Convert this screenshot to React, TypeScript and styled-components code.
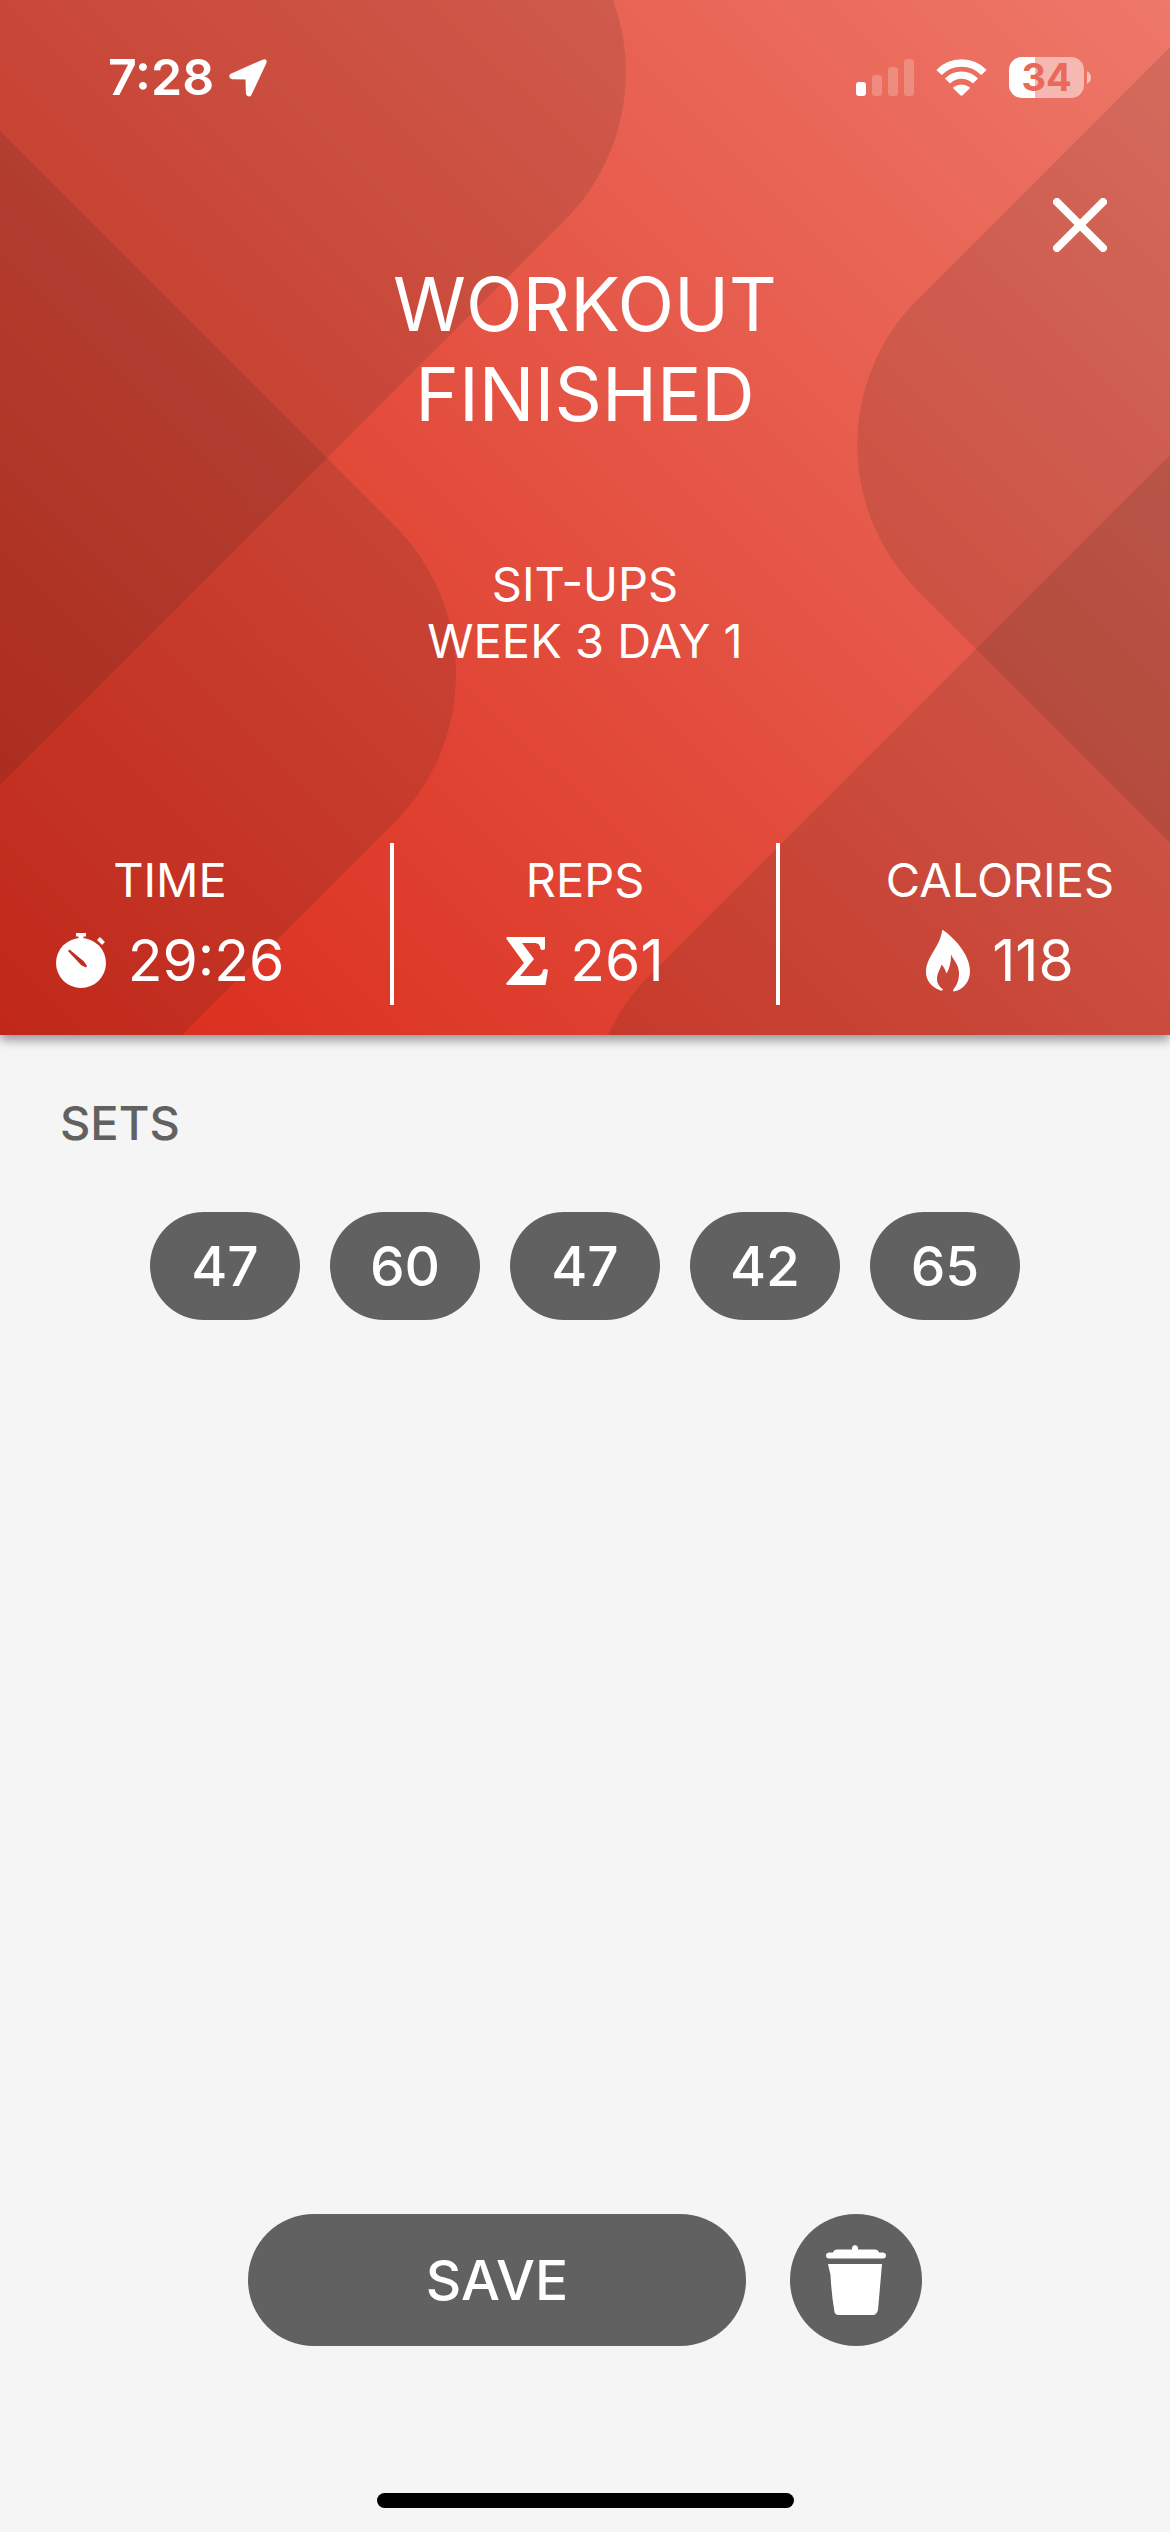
import React from "react";
import styled, { createGlobalStyle } from "styled-components";

const GlobalStyle = createGlobalStyle`
  * { box-sizing: border-box; }
  body {
    margin: 0;
    background: #f5f5f5;
    font-family: Inter, "Liberation Sans", sans-serif;
  }
  h1, h2, p, dl, dt, dd, ul { margin: 0; padding: 0; font-weight: inherit; }
  svg { display: block; }
`;

const Page = styled.div`
  min-height: 100vh;
  display: flex;
  flex-direction: column;
`;

const Header = styled.header`
  position: relative;
  isolation: isolate;
  display: flex;
  flex-direction: column;
  padding-bottom: 30px;
  color: #fff;
  background: #e14c3c;
  box-shadow: 0 5px 10px rgba(0, 0, 0, 0.4);
`;

const Backdrop = styled.svg`
  position: absolute;
  inset: 0;
  z-index: -1;
  width: 100%;
  height: 100%;
`;

const StatusBar = styled.div`
  display: flex;
  justify-content: space-between;
  align-items: center;
  height: 98px;
  padding: 57px 79px 0 108px;
`;

const StatusGroup = styled.div<{ $gap: number }>`
  display: flex;
  align-items: center;
  gap: ${(p) => p.$gap}px;
`;

const Clock = styled.span`
  font-size: 50px;
  line-height: 41px;
  font-weight: 600;
`;

const Battery = styled.div`
  display: flex;
  align-items: center;
  gap: 3px;
`;

const BatteryBody = styled.div`
  width: 75px;
  height: 41px;
  border-radius: 13px;
  background: linear-gradient(90deg, #fff 26px, rgba(255, 255, 255, 0.5) 26px);
  color: #e9695b;
  font-size: 38px;
  line-height: 41px;
  font-weight: 700;
  text-align: center;
`;

const CloseRow = styled.div`
  display: flex;
  justify-content: flex-end;
  margin-top: 100px;
  padding-right: 63px;
`;

const CloseButton = styled.button`
  padding: 0;
  border: 0;
  background: none;
  color: inherit;
  cursor: pointer;
`;

const Title = styled.h1`
  margin-top: 7px;
  font-size: 74px;
  line-height: 90px;
  font-weight: 400;
  text-align: center;
`;

const Subtitle = styled.p`
  margin-top: 116px;
  font-size: 47px;
  line-height: 57px;
  font-weight: 400;
  text-align: center;
`;

const Stats = styled.dl`
  display: grid;
  grid-template-columns: repeat(3, 1fr);
  margin-top: 174px;
`;

const Stat = styled.div`
  display: flex;
  flex-direction: column;
  align-items: center;
  gap: 23px;
  padding: 9px 0 14px;

  &:first-child { padding-right: 50px; }
  &:last-child { padding-left: 50px; }
  &:nth-child(2) {
    border: solid #fff;
    border-width: 0 4px;
  }
`;

const StatLabel = styled.dt`
  font-size: 47px;
  line-height: 56px;
  font-weight: 400;
`;

const StatValue = styled.dd`
  display: flex;
  align-items: center;
  gap: 22px;
  height: 60px;
  font-size: 57px;
  line-height: 60px;
  font-weight: 400;
`;

const Main = styled.main`
  flex: 1;
  padding: 60px;
`;

const SectionTitle = styled.h2`
  color: #616161;
  font-size: 47px;
  line-height: 56px;
  font-weight: 500;
`;

const SetList = styled.ul`
  display: flex;
  flex-wrap: wrap;
  justify-content: center;
  gap: 30px;
  margin-top: 61px;
  list-style: none;
`;

const SetChip = styled.li`
  width: 150px;
  border-radius: 54px;
  background: #616161;
  color: #fff;
  font-size: 55px;
  line-height: 108px;
  font-weight: 500;
  text-align: center;
`;

const Footer = styled.footer`
  display: flex;
  flex-direction: column;
  align-items: center;
  gap: 147px;
  padding-bottom: 24px;
`;

const Actions = styled.div`
  display: flex;
  gap: 44px;
`;

const ActionButton = styled.button<{ $width: number }>`
  display: flex;
  align-items: center;
  justify-content: center;
  width: ${(p) => p.$width}px;
  height: 132px;
  padding: 0;
  border: 0;
  border-radius: 66px;
  background: #616161;
  color: #fff;
  font-family: inherit;
  font-size: 55px;
  font-weight: 500;
  cursor: pointer;
`;

const HomeIndicator = styled.div`
  width: 417px;
  height: 15px;
  border-radius: 8px;
  background: #000;
`;

const HeaderArt = () => (
  <Backdrop viewBox="0 0 1170 1035" preserveAspectRatio="xMidYMid slice" aria-hidden="true">
    <defs>
      <linearGradient id="glow" gradientUnits="userSpaceOnUse" x1="34" y1="1069" x2="1136" y2="-34">
        <stop offset="0" stopColor="#d92a1a" />
        <stop offset="0.42" stopColor="#e24a3a" />
        <stop offset="1" stopColor="#ee786a" />
      </linearGradient>
    </defs>
    <rect width="1170" height="1035" fill="url(#glow)" />
    <g fill="#201c14" fillOpacity="0.13">
      <path d="M0 0H613A210 210 0 0 1 564 221L0 785Z" />
      <path d="M0 131L394 525A210 210 0 0 1 394 823L182 1035H0Z" />
      <path d="M1170 47L918 299A206 206 0 0 0 918 591L1170 843Z" />
      <path d="M1170 455L648 977A206 206 0 0 0 608 1035H1170Z" />
    </g>
  </Backdrop>
);

const LocationIcon = () => (
  <svg width="40" height="40" viewBox="0 0 40 40" aria-hidden="true">
    <path
      d="M35 2.6L3.2 16.6Q2 17.3 2.4 18.8Q2.8 20.200 4.200 20.200L18.500 20.600L18.900 35.500Q19 37 20.400 37.400Q21.800 37.800 22.600 36.400L37.400 4.800Q38.500 1.200 35 2.600Z"
      fill="#fff"
      stroke="#fff"
      strokeWidth="2"
      strokeLinejoin="round"
    />
  </svg>
);

const SignalIcon = () => (
  <svg width="58" height="37" viewBox="0 0 58 37" fill="#fff" role="img" aria-label="Signal">
    <rect y="23" width="10" height="14" rx="3" />
    <rect x="16" y="16" width="10" height="21" rx="3" opacity="0.22" />
    <rect x="32" y="8" width="10" height="29" rx="3" opacity="0.22" />
    <rect x="48" width="10" height="37" rx="3" opacity="0.22" />
  </svg>
);

const WifiIcon = () => (
  <svg width="51" height="37" viewBox="0 0 51 37" fill="none" role="img" aria-label="Wi-Fi">
    <path d="M3 13.500A31.500 31.500 0 0 1 48 13.500" stroke="#fff" strokeWidth="7.400" />
    <path d="M11.500 22A19.700 19.700 0 0 1 39.500 22" stroke="#fff" strokeWidth="7.200" />
    <path d="M17.300 28.300Q25.500 22.800 33.700 28.300Q34 29 33.300 29.800L26.600 36.300Q25.500 37.200 24.400 36.300L17.700 29.800Q17 29 17.300 28.300Z" fill="#fff" />
  </svg>
);

const BatteryNub = () => (
  <svg width="4" height="13" viewBox="0 0 4 13" aria-hidden="true">
    <path d="M0 0Q4 2 4 6.500T0 13Z" fill="#fff" opacity="0.55" />
  </svg>
);

const CloseIcon = () => (
  <svg width="54" height="54" viewBox="0 0 54 54" aria-hidden="true">
    <path d="M4 4L50 50M50 4L4 50" stroke="#fff" strokeWidth="8" strokeLinecap="round" />
  </svg>
);

const StopwatchIcon = () => (
  <svg width="50" height="58" viewBox="0 0 50 58" aria-hidden="true">
    <mask id="watch-hand">
      <rect width="50" height="58" fill="#fff" />
      <path d="M12 19L13.500 17.500L28 29.500L31 34L30 35.500L25 33Z" fill="#000" />
    </mask>
    <circle cx="25" cy="31" r="25" fill="#fff" mask="url(#watch-hand)" />
    <path d="M20 1H30V4.500H27.500V7H22.500V4.500H20Z" fill="#fff" />
    <path d="M42.500 6.500L47.500 11.500" stroke="#fff" strokeWidth="4" />
  </svg>
);

const SigmaIcon = () => (
  <svg width="42" height="48" viewBox="0 0 42 48" fill="#fff" aria-hidden="true">
    <path d="M1 0H39V12Q36 14 34.500 12Q34 6 29 6H16L28 22L14 39H31Q36 39 37 33Q39 31 42 33L39.500 48H1Q0 47 .5 46L18 26L.5 2Q0 .8 1 0Z" />
  </svg>
);

const FlameIcon = () => (
  <svg width="44" height="62" viewBox="0 0 44 62" fill="#fff" aria-hidden="true">
    <path d="M17 0C27 7 44 24 44 41C44 52 37 60 27.500 61.500Q26.500 60.500 28 58.500C32 54 33 48 33 43C33 35 28 31 25 24.500C25 31 24 38 20.500 43.500C19.500 40 18 37 15.500 34.500C14.500 39 11 43 11 49C11 54 14 57 17 59.500Q16.500 61 14.500 60.500C5 57 0 50 0 42C0 27 14 17 16 1Q16.200 0 17 0Z" />
  </svg>
);

const TrashIcon = () => (
  <svg width="60" height="70" viewBox="0 0 60 70" fill="#fff" aria-hidden="true">
    <path d="M3 7.500H7Q8 4.500 11 4.500H26V2.500Q26.500 0 29 0T32 2.500V4.500H49Q52 4.500 53 7.500H57Q60 8 60 10.500Q60 13.500 57 13.500H3Q0 13.500 0 10.500Q0 8 3 7.500Z" />
    <path d="M2 19H56L52 65Q50.500 70 47 70H13Q9 70 8.500 67Q5.500 50 4.500 30Z" />
  </svg>
);

const stats = [
  { label: "TIME", value: "29:26", Icon: StopwatchIcon },
  { label: "REPS", value: "261", Icon: SigmaIcon },
  { label: "CALORIES", value: "118", Icon: FlameIcon },
];

const sets = [47, 60, 47, 42, 65];

export default function App() {
  return (
    <Page>
      <GlobalStyle />
      <Header>
        <HeaderArt />
        <StatusBar>
          <StatusGroup $gap={14}>
            <Clock>7:28</Clock>
            <LocationIcon />
          </StatusGroup>
          <StatusGroup $gap={22}>
            <SignalIcon />
            <WifiIcon />
            <Battery>
              <BatteryBody>34</BatteryBody>
              <BatteryNub />
            </Battery>
          </StatusGroup>
        </StatusBar>
        <CloseRow>
          <CloseButton type="button" aria-label="Close">
            <CloseIcon />
          </CloseButton>
        </CloseRow>
        <Title>
          WORKOUT
          <br />
          FINISHED
        </Title>
        <Subtitle>
          SIT-UPS
          <br />
          WEEK 3 DAY 1
        </Subtitle>
        <Stats>
          {stats.map(({ label, value, Icon }) => (
            <Stat key={label}>
              <StatLabel>{label}</StatLabel>
              <StatValue>
                <Icon />
                {value}
              </StatValue>
            </Stat>
          ))}
        </Stats>
      </Header>
      <Main>
        <SectionTitle>SETS</SectionTitle>
        <SetList>
          {sets.map((reps, i) => (
            <SetChip key={i}>{reps}</SetChip>
          ))}
        </SetList>
      </Main>
      <Footer>
        <Actions>
          <ActionButton type="button" $width={498}>
            SAVE
          </ActionButton>
          <ActionButton type="button" $width={132} aria-label="Delete workout">
            <TrashIcon />
          </ActionButton>
        </Actions>
        <HomeIndicator />
      </Footer>
    </Page>
  );
}
